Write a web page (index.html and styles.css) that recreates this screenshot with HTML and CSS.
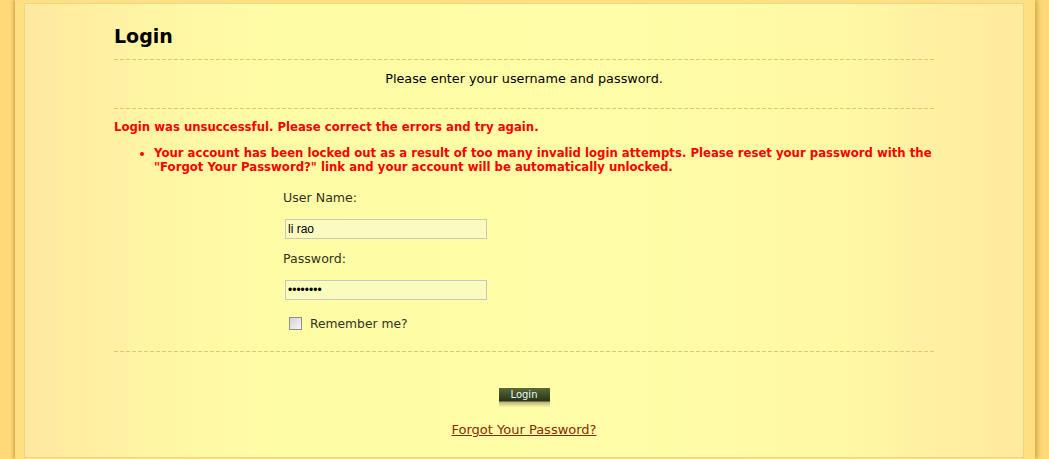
FILE: index.html
```html
<!DOCTYPE html>
<html>
<head>
<meta charset="utf-8">
<title>Login</title>
<link rel="stylesheet" href="styles.css">
</head>
<body>
<div class="page">
  <div class="panel">
    <div class="content">
      <h2 class="title">Login</h2>
      <div class="rule"></div>
      <p class="intro">Please enter your username and password.</p>
      <div class="rule"></div>
      <div class="errors">
        <span class="summary">Login was unsuccessful. Please correct the errors and try again.</span>
        <ul class="error-list">
          <li>Your account has been locked out as a result of too many invalid login attempts. Please reset your password with the "Forgot Your Password?" link and your account will be automatically unlocked.</li>
        </ul>
      </div>
      <div class="form">
        <label class="label">User Name:</label>
        <input class="field" type="text" value="li rao">
        <label class="label">Password:</label>
        <input class="field" type="password" value="password">
        <label class="remember"><input class="check" type="checkbox"> Remember me?</label>
      </div>
      <div class="rule"></div>
      <div class="actions">
        <button class="btn">Login</button>
        <a class="forgot" href="#">Forgot Your Password?</a>
      </div>
    </div>
  </div>
</div>
</body>
</html>
```
FILE: styles.css
```css
html, body {
  margin: 0;
  padding: 0;
}
body {
  background: #ffd878;
  font-family: "DejaVu Sans", Verdana, sans-serif;
  height: 459px;
  overflow: hidden;
}
.page {
  margin: 0 14px 0 15px;
  background: #ffdf80;
  padding: 3px 11px 0 9px;
  height: 456px;
  box-shadow: -2px 0 3px rgba(170,130,40,0.45), 3px 0 4px rgba(170,130,40,0.45);
}
.panel {
  border: 1px solid #e2d98a;
  height: 455px;
  box-sizing: border-box;
  background: linear-gradient(to right, #ffe89e 0%, #fff5a4 12%, #fffca6 25%, #fffda7 60%, #fff8a5 82%, #ffe99e 100%);
}
.content {
  width: 820px;
  margin-left: 89px;
}
.title {
  margin: 0;
  padding-top: 21px;
  height: 34px;
  font-size: 19px;
  font-weight: bold;
  color: #000;
  line-height: 23px;
}
.rule {
  height: 1px;
  background: repeating-linear-gradient(to right, #dccb6c 0, #dccb6c 4px, transparent 4px, transparent 6px);
}
.intro {
  margin: 0;
  height: 48px;
  line-height: 38px;
  text-align: center;
  font-size: 12.8px;
  color: #000;
}
.errors {
  color: #ff0000;
  font-weight: bold;
  font-size: 11.7px;
  padding-top: 11px;
}
.summary {
  display: block;
  line-height: 14px;
}
.error-list {
  margin: 12px 0 0 0;
  padding-left: 40px;
  line-height: 14px;
}
.form {
  display: flex;
  flex-direction: column;
  align-items: flex-start;
  padding-left: 169px;
  padding-top: 17px;
  padding-bottom: 21px;
}
.label {
  font-size: 12.6px;
  color: #333318;
  line-height: 14px;
  margin-bottom: 14px;
}
.field {
  margin: 0 0 13px 2px;
  width: 202px;
  height: 20px;
  box-sizing: border-box;
  border: 1px solid #c9c9bb;
  background: #f9fcbe;
  font-family: "Liberation Sans", Arial, sans-serif;
  font-size: 12px;
  padding: 0 2px;
  color: #000;
  outline: none;
}
.remember {
  display: flex;
  align-items: center;
  gap: 8px;
  margin-left: 6px;
  margin-top: 4px;
  height: 13px;
  font-size: 12.3px;
  line-height: 14px;
  color: #333318;
}
.check {
  -webkit-appearance: none;
  appearance: none;
  width: 13px;
  height: 13px;
  margin: 0;
  border: 1px solid #8f8f8f;
  background: linear-gradient(135deg, #d2d2d2, #f6f6f6);
  box-sizing: border-box;
  flex: none;
}
.actions {
  display: flex;
  flex-direction: column;
  align-items: center;
  padding-top: 36px;
}
.btn {
  width: 51px;
  height: 19px;
  border: 0;
  padding: 0 0 5px 0;
  background: linear-gradient(to bottom, #5b6a3b 0, #3e4c24 7px, #283516 13px, #b8b478 14px, #fbf7a4 19px);
  color: #e6f4ff;
  font-family: "DejaVu Sans", Verdana, sans-serif;
  font-size: 10px;
  line-height: 14px;
}
.forgot {
  margin-top: 15px;
  font-size: 13px;
  color: #8b2a00;
  text-decoration: underline;
}
```
